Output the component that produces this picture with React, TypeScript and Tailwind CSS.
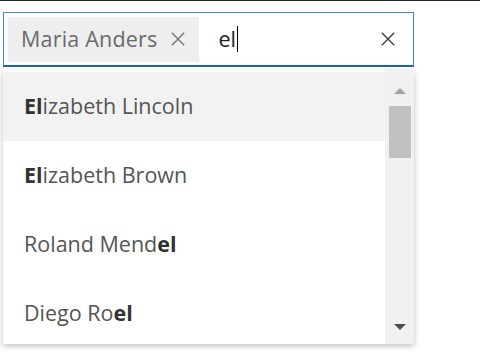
const font = { fontFamily: '"Open Sans", "Noto Sans", sans-serif' };

const people = [
  { pre: "", hit: "El", post: "izabeth Lincoln", active: true },
  { pre: "", hit: "El", post: "izabeth Brown" },
  { pre: "Roland Mend", hit: "el", post: "" },
  { pre: "Diego Ro", hit: "el", post: "" },
];

function CloseIcon({ className }: { className?: string }) {
  return (
    <svg viewBox="0 0 16 16" className={className} fill="none" stroke="currentColor" strokeWidth="1.3">
      <path d="M2.5 2.5l11 11M13.5 2.5l-11 11" />
    </svg>
  );
}

export default function App() {
  return (
    <div className="h-[360px] w-[480px] bg-white" style={font}>
      <div className="h-px bg-[#222]" />
      <div className="pl-[3px] pt-[11px]">
        <div className="flex h-[55px] w-[411px] items-center border border-[#4a86c5] border-b-2 border-b-[#1c64ad] bg-white pl-[4px] pr-[16px]">
          <div className="flex h-[45px] items-center gap-[12px] bg-[#eeeeee] pl-[13px] pr-[12px] text-[21.5px] tracking-[0.2px] text-[#6a6a6a]">
            <span>Maria Anders</span>
            <CloseIcon className="h-[18px] w-[18px] text-[#777]" />
          </div>
          <div className="ml-[19px] flex flex-1 items-center text-[21.5px] text-[#222]">
            el<span className="ml-px h-[26px] w-px bg-black" />
          </div>
          <CloseIcon className="h-[18px] w-[18px] text-[#444]" />
        </div>
        <div className="mt-[3px] flex h-[274px] w-[411px] overflow-hidden bg-white shadow-[0_2px_6px_rgba(0,0,0,0.25)]">
          <ul className="flex-1 pt-[2px]">
            {people.map((p) => (
              <li
                key={p.pre + p.post}
                className={`flex h-[69px] items-center pl-[21px] text-[21.5px] text-[#555] ${p.active ? "bg-[#f2f2f2]" : ""}`}
              >
                {p.pre}
                <b className="font-bold text-[#333]">{p.hit}</b>
                {p.post}
              </li>
            ))}
          </ul>
          <div className="flex w-[29px] flex-col items-center bg-[#f1f1f1] pb-[14px] pt-[18px]">
            <div className="h-0 w-0 border-x-[6px] border-b-[6px] border-x-transparent border-b-[#a3a3a3]" />
            <div className="mt-[12px] h-[52px] w-[22px] bg-[#c1c1c1]" />
            <div className="flex-1" />
            <div className="h-0 w-0 border-x-[6px] border-t-[6px] border-x-transparent border-t-[#505050]" />
          </div>
        </div>
      </div>
    </div>
  );
}
